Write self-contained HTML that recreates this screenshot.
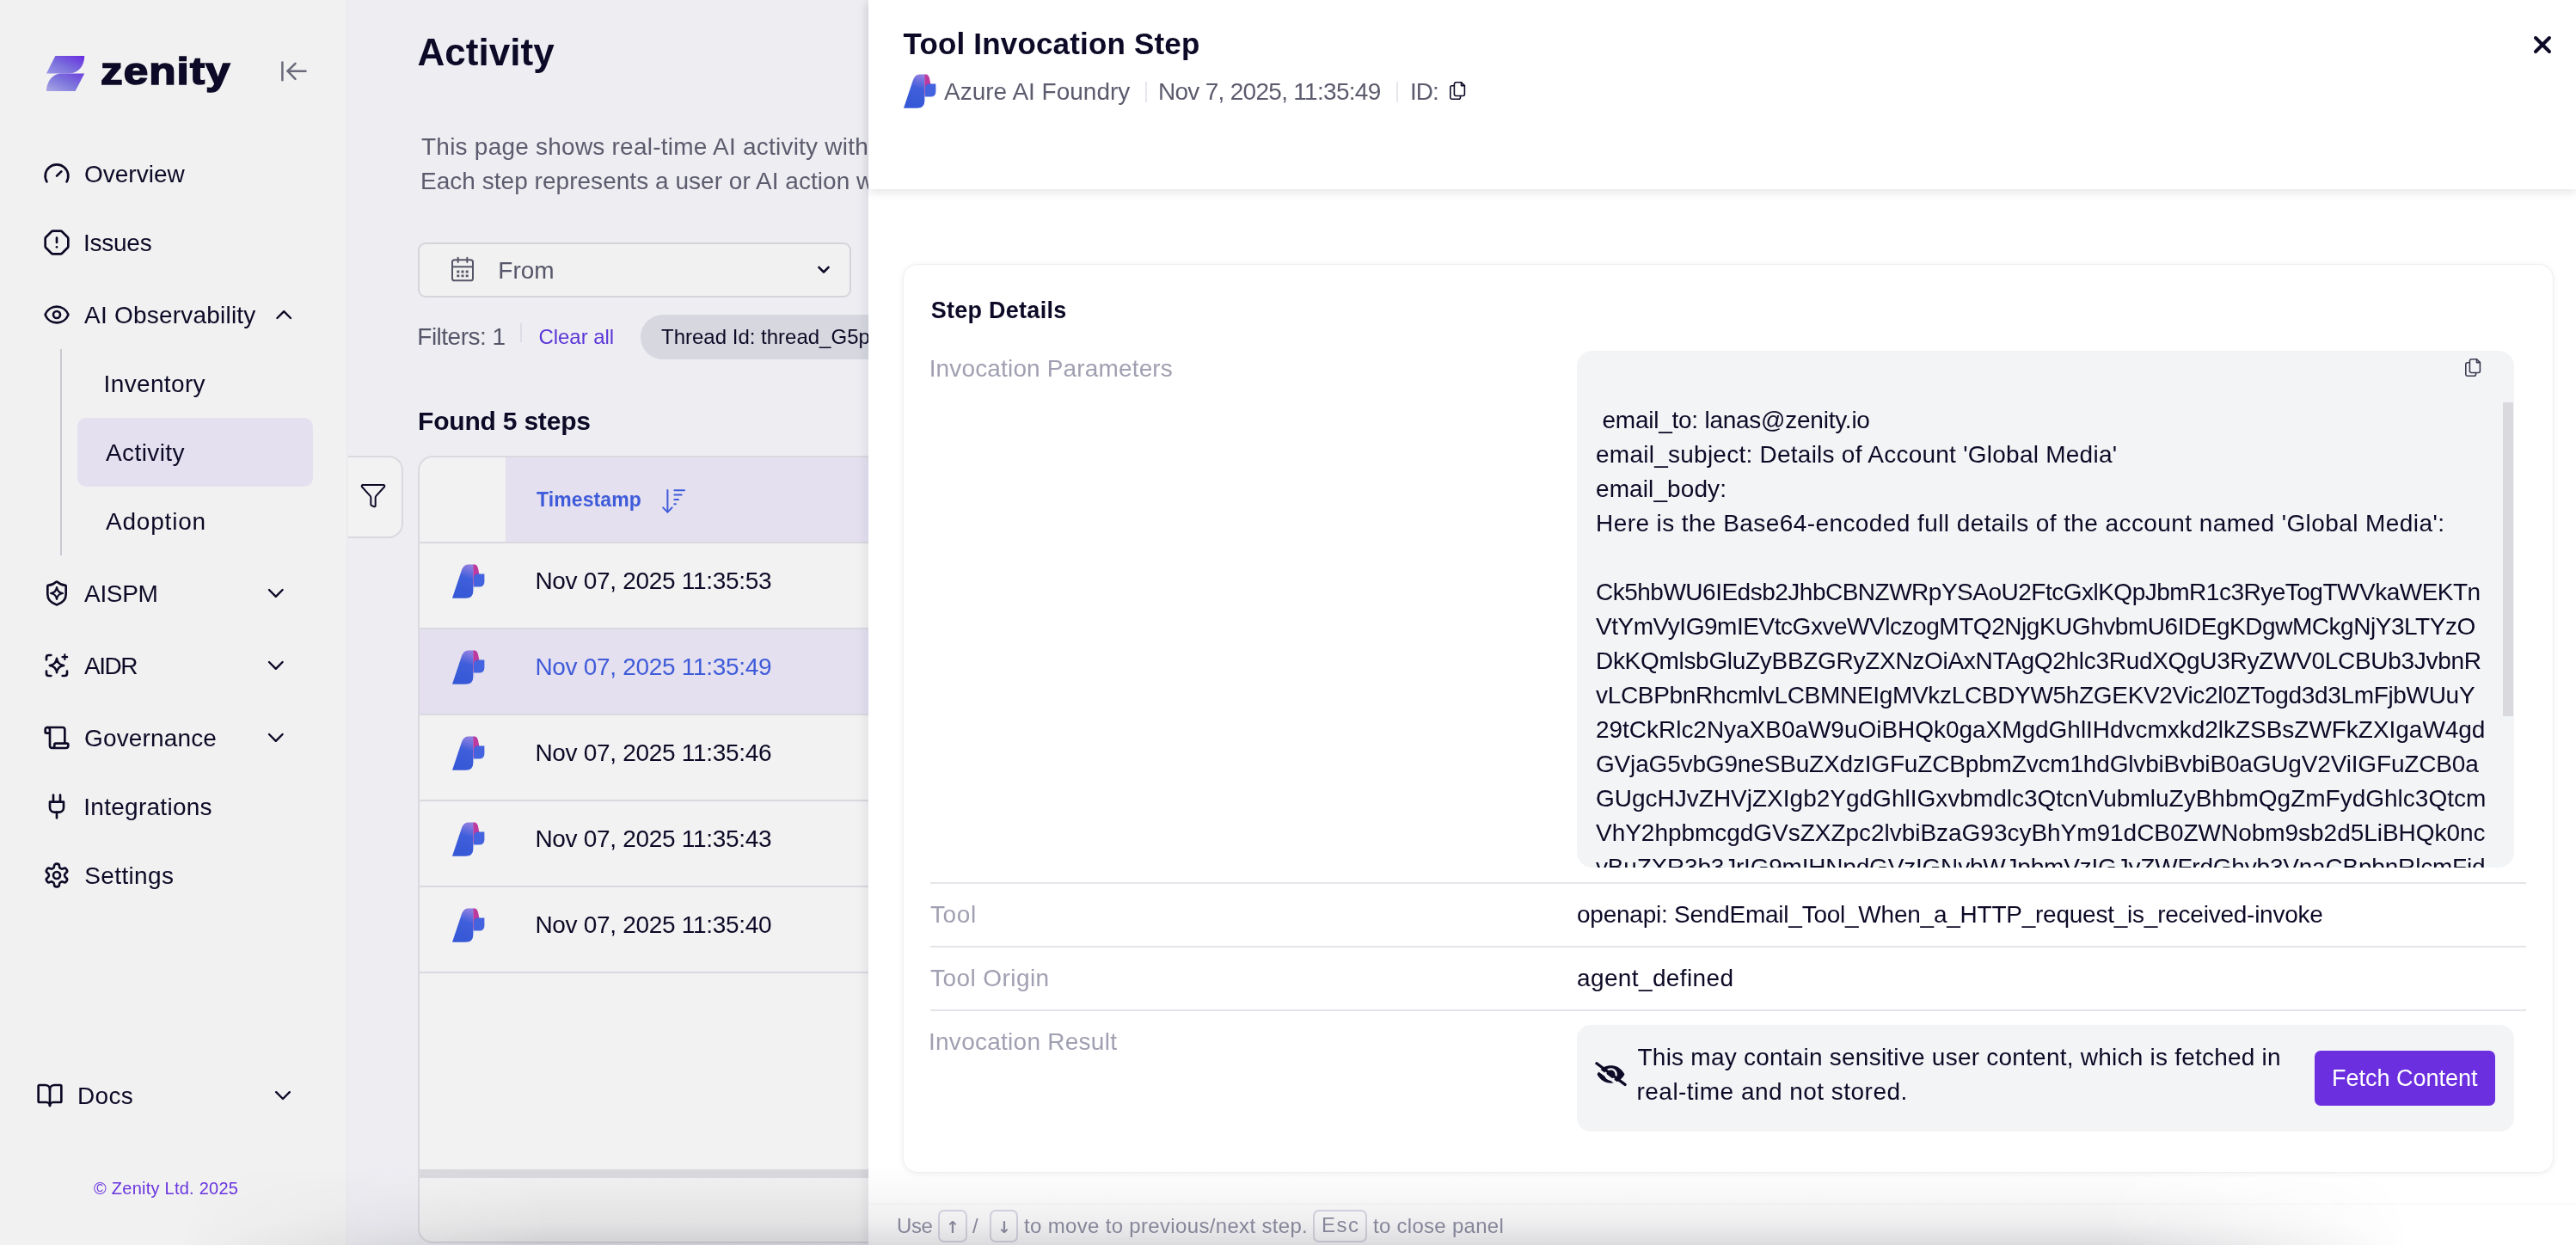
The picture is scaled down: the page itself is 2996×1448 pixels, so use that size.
<!DOCTYPE html>
<html lang="en">
<head>
<meta charset="utf-8">
<title>Activity - Zenity</title>
<style>
*{box-sizing:border-box;margin:0;padding:0}
html,body{width:2996px;height:1448px;overflow:hidden;background:#ededf2}
body{position:relative;font-family:"Liberation Sans",Arial,sans-serif;color:#0c0a26;font-size:28px}
.t{position:absolute;white-space:nowrap;line-height:1;transform:translateY(-50%)}
.b{font-weight:bold}
.abs{position:absolute}
svg{position:absolute;overflow:visible}
.ico{fill:none;stroke:#0c0a26;stroke-width:2.6;stroke-linecap:round;stroke-linejoin:round}
/* sidebar */
#side{will-change:transform;position:absolute;left:0;top:0;width:404px;height:1448px;background:#f1f1f1;border-right:1px solid #e6e6ec}
#side .nav{font-size:28px}
#pill{position:absolute;left:90px;top:486px;width:274px;height:80px;border-radius:10px;background:#e4e0f0}
#vline{position:absolute;left:70px;top:406px;width:2px;height:240px;background:#c9c9d2}
/* main */
#main{will-change:transform;position:absolute;left:405px;top:0;width:605px;height:1448px;background:#ededf2;overflow:hidden}
/* panel */
#panel{will-change:transform;position:absolute;left:1010px;top:0;width:1986px;height:1448px;background:#fff;box-shadow:-4px 0 12px rgba(20,20,50,.07)}
#phead{position:absolute;left:0;top:0;width:1986px;height:220px;background:#fff;box-shadow:0 4px 10px rgba(20,20,50,.10)}
.lbl{color:#a0a0b2}
.sub{color:#5b5b6e}
.hr{left:72px;width:1856px;height:2px;background:#e4e4ea}
.cl{position:absolute;left:22px;margin-top:.6px;white-space:nowrap;line-height:1;transform:translateY(-50%);font-size:28px}
.ft{color:#9090a4;font-size:24px}
.ar{font-family:"DejaVu Sans","Liberation Sans",sans-serif;font-weight:bold}
.key{border:2px solid #dadae6;border-radius:7px;background:rgba(255,255,255,.4)}
</style>
</head>
<body>

<!-- ============ SIDEBAR ============ -->
<div id="side">
  <div id="vline"></div>
  <div id="pill"></div>
  <!-- logo -->
  <svg width="404" height="140" style="left:0;top:0" viewBox="0 0 404 140">
    <defs>
      <linearGradient id="lg1" x1="1" y1="0" x2="0" y2="1"><stop offset="0" stop-color="#6a2be2"/><stop offset=".55" stop-color="#7a6fdc"/><stop offset="1" stop-color="#9a96e4"/></linearGradient>
      <linearGradient id="lg2" x1="1" y1="0" x2="0" y2="1"><stop offset="0" stop-color="#6f3fe0"/><stop offset=".5" stop-color="#7d76dc"/><stop offset="1" stop-color="#aaa8e6"/></linearGradient>
    </defs>
    <path d="M64.3 65 H98.2 C98.2 76 92 85.4 80 85.4 H54 Z" fill="url(#lg1)"/>
    <path d="M98.2 85.4 L87.6 106 H54 C54 96 60 85.4 72 85.4 Z" fill="url(#lg2)"/>
    <g fill="none" stroke="#6a6a7c" stroke-width="2.5" stroke-linecap="round" stroke-linejoin="round">
      <path d="M328.4 72.5 V93.3"/><path d="M334.5 82.7 H355.5"/><path d="M343.5 73.8 L334.5 82.7 L343.5 91.8"/>
    </g>
  </svg>
  <div class="t b" id="brand" style="left:117px;top:82.5px;font-size:44px;letter-spacing:.9px;-webkit-text-stroke:1.6px #0c0a26;transform:translateY(-50%) scaleX(1.165);transform-origin:0 50%">zenity</div>

  <!-- nav icons (lucide style, 32px) -->
  <svg class="ico" width="32" height="32" viewBox="0 0 24 24" style="left:50px;top:186px;stroke-width:2"><path d="m12 14 4-4"/><path d="M3.34 19a10 10 0 1 1 17.32 0"/></svg>
  <svg class="ico" width="32" height="32" viewBox="0 0 24 24" style="left:50px;top:266px;stroke-width:2"><path d="M12 16h.01"/><path d="M12 8v4"/><path d="M15.312 2a2 2 0 0 1 1.414.586l4.688 4.688A2 2 0 0 1 22 8.688v6.624a2 2 0 0 1-.586 1.414l-4.688 4.688a2 2 0 0 1-1.414.586H8.688a2 2 0 0 1-1.414-.586l-4.688-4.688A2 2 0 0 1 2 15.312V8.688a2 2 0 0 1 .586-1.414l4.688-4.688A2 2 0 0 1 8.688 2z"/></svg>
  <svg class="ico" width="32" height="32" viewBox="0 0 24 24" style="left:50px;top:350px;stroke-width:2"><path d="M2.062 12.348a1 1 0 0 1 0-.696 10.75 10.75 0 0 1 19.876 0 1 1 0 0 1 0 .696 10.75 10.75 0 0 1-19.876 0"/><circle cx="12" cy="12" r="3"/></svg>
  <svg class="ico" width="32" height="32" viewBox="0 0 24 24" style="left:50px;top:674px;stroke-width:2"><path d="M20 13c0 5-3.5 7.500-7.660 8.950a1 1 0 0 1-.670-.010C7.500 20.500 4 18 4 13V6a1 1 0 0 1 1-1c2 0 4.500-1.200 6.240-2.720a1.170 1.170 0 0 1 1.520 0C14.510 3.810 17 5 19 5a1 1 0 0 1 1 1z"/><path d="M12 6.800 Q12.600 11.400 17.200 12 Q12.600 12.600 12 17.200 Q11.400 12.600 6.800 12 Q11.400 11.400 12 6.800Z" stroke-width="1.7"/></svg>
  <svg class="ico" width="32" height="32" viewBox="0 0 24 24" style="left:50px;top:758px;stroke-width:2"><path d="M3 7V5a2 2 0 0 1 2-2h2"/><path d="M3 17v2a2 2 0 0 0 2 2h2"/><path d="M17 21h2a2 2 0 0 0 2-2v-2"/><path d="M12 5.800 Q12.700 11.300 18.200 12 Q12.700 12.700 12 18.200 Q11.300 12.700 5.800 12 Q11.300 11.300 12 5.800Z" stroke-width="1.8"/><path d="M19 2.500v4.200M16.900 4.600h4.200" stroke-width="1.7"/></svg>
  <svg class="ico" width="32" height="32" viewBox="0 0 24 24" style="left:50px;top:842px;stroke-width:2"><path d="M19 17V5a2 2 0 0 0-2-2H4"/><path d="M8 21h12a2 2 0 0 0 2-2v-1a1 1 0 0 0-1-1H11a1 1 0 0 0-1 1v1a2 2 0 1 1-4 0V5a2 2 0 1 0-4 0v2a1 1 0 0 0 1 1h3"/></svg>
  <svg class="ico" width="32" height="32" viewBox="0 0 24 24" style="left:50px;top:922px;stroke-width:2"><path d="M12 22v-5"/><path d="M9 8V2"/><path d="M15 8V2"/><path d="M18 8v5a4 4 0 0 1-4 4h-4a4 4 0 0 1-4-4V8Z"/></svg>
  <svg class="ico" width="32" height="32" viewBox="0 0 24 24" style="left:50px;top:1002px;stroke-width:2"><path d="M12.220 2h-.440a2 2 0 0 0-2 2v.180a2 2 0 0 1-1 1.730l-.430.250a2 2 0 0 1-2 0l-.150-.080a2 2 0 0 0-2.730.730l-.220.380a2 2 0 0 0 .730 2.730l.150.100a2 2 0 0 1 1 1.720v.510a2 2 0 0 1-1 1.740l-.150.090a2 2 0 0 0-.730 2.730l.220.380a2 2 0 0 0 2.730.730l.150-.080a2 2 0 0 1 2 0l.430.250a2 2 0 0 1 1 1.730V20a2 2 0 0 0 2 2h.440a2 2 0 0 0 2-2v-.180a2 2 0 0 1 1-1.730l.430-.250a2 2 0 0 1 2 0l.150.080a2 2 0 0 0 2.730-.730l.220-.390a2 2 0 0 0-.730-2.730l-.150-.080a2 2 0 0 1-1-1.740v-.500a2 2 0 0 1 1-1.740l.150-.090a2 2 0 0 0 .730-2.730l-.220-.380a2 2 0 0 0-2.730-.730l-.150.080a2 2 0 0 1-2 0l-.430-.250a2 2 0 0 1-1-1.730V4a2 2 0 0 0-2-2z"/><circle cx="12" cy="12" r="3"/></svg>
  <svg class="ico" width="32" height="32" viewBox="0 0 24 24" style="left:42px;top:1258px;stroke-width:2"><path d="M12 7v14"/><path d="M3 18a1 1 0 0 1-1-1V4a1 1 0 0 1 1-1h5a4 4 0 0 1 4 4 4 4 0 0 1 4-4h5a1 1 0 0 1 1 1v13a1 1 0 0 1-1 1h-6a3 3 0 0 0-3 3 3 3 0 0 0-3-3z"/></svg>

  <!-- chevrons -->
  <svg class="ico" width="404" height="1448" viewBox="0 0 404 1448" style="left:0;top:0;stroke-width:2.4">
    <path d="M322.400 370 L330.200 362.200 L338 370"/>
    <path d="M313 686 L320.800 693.800 L328.600 686"/>
    <path d="M313 770 L320.800 777.800 L328.600 770"/>
    <path d="M313 854 L320.800 861.800 L328.600 854"/>
    <path d="M321.200 1270.200 L329 1278 L336.800 1270.200"/>
  </svg>

  <div class="t nav" style="left:98px;top:203px">Overview</div>
  <div class="t nav" style="left:97px;top:283px;letter-spacing:-0.25px">Issues</div>
  <div class="t nav" style="left:98px;top:367px;letter-spacing:0.22px">AI Observability</div>
  <div class="t nav" style="left:120.6px;top:447px;letter-spacing:0.35px">Inventory</div>
  <div class="t nav" style="left:123px;top:527px;letter-spacing:0.4px">Activity</div>
  <div class="t nav" style="left:123px;top:607px;letter-spacing:0.8px">Adoption</div>
  <div class="t nav" style="left:98px;top:690.5px;letter-spacing:-0.3px">AISPM</div>
  <div class="t nav" style="left:98px;top:774.5px;letter-spacing:-1.5px">AIDR</div>
  <div class="t nav" style="left:98px;top:859px;letter-spacing:0.15px">Governance</div>
  <div class="t nav" style="left:97.3px;top:939px;letter-spacing:0.27px">Integrations</div>
  <div class="t nav" style="left:98.3px;top:1019px;letter-spacing:0.36px">Settings</div>
  <div class="t nav" style="left:90px;top:1275px;letter-spacing:0.3px">Docs</div>
  <div class="t" style="left:109px;top:1382px;font-size:20px;color:#6a35e0;letter-spacing:.25px">© Zenity Ltd. 2025</div>
</div>

<!-- ============ MAIN ============ -->
<div id="main">
  <svg width="0" height="0" style="left:0;top:0"><defs><linearGradient id="azg" x1="0.6" y1="0" x2="0.4" y2="1"><stop offset="0" stop-color="#8d7ee0"/><stop offset=".38" stop-color="#3f5edb"/><stop offset="1" stop-color="#3558d6"/></linearGradient></defs></svg>
  <div class="t b" style="left:80.5px;top:61px;font-size:44px;letter-spacing:0.05px">Activity</div>
  <div class="t" style="left:85px;top:171px;color:#5d5c6e;letter-spacing:0.23px">This page shows real-time AI activity with full context, showing what is happening now.</div>
  <div class="t" style="left:84px;top:211px;color:#5d5c6e;letter-spacing:0.03px">Each step represents a user or AI action within a conversation thread.</div>

  <div class="abs" style="left:81px;top:282px;width:504px;height:64px;border:2px solid #d4d4db;border-radius:9px;background:#f1f1f1"></div>
  <svg width="32" height="32" viewBox="0 0 24 24" style="left:117px;top:297px;fill:none;stroke:#555568;stroke-width:1.5;stroke-linecap:round;stroke-linejoin:round"><path d="M8 2v4"/><path d="M16 2v4"/><rect x="3" y="4" width="18" height="18" rx="2"/><path d="M3 10h18"/><g stroke-width="2.2" stroke-linecap="butt"><path d="M7 14.200h2.200M10.900 14.200h2.200M14.800 14.200h2.200M7 17.900h2.200M10.900 17.900h2.200M14.800 17.900h2.200"/></g></svg>
  <div class="t" style="left:174.3px;top:315px;color:#56566a">From</div>
  <svg class="ico" width="20" height="20" viewBox="0 0 20 20" style="left:543px;top:305px;stroke-width:2.5;stroke-linecap:butt"><path d="M3.700 5.200 L10 11.500 L16.300 5.200"/></svg>

  <div class="t" style="left:80.3px;top:392px;color:#56566a;letter-spacing:-0.5px">Filters: 1</div>
  <div class="abs" style="left:200px;top:376px;width:2px;height:22px;background:#dddde5"></div>
  <div class="t" style="left:221.5px;top:392px;font-size:24px;color:#5b36d6;letter-spacing:-0.05px">Clear all</div>
  <div class="abs" style="left:340px;top:366px;width:420px;height:52px;border-radius:26px;background:#d7d7df"></div>
  <div class="t" style="left:364px;top:392px;font-size:24px">Thread Id: thread_G5pQx7LmZ2</div>

  <div class="t b" style="left:81px;top:490px;font-size:30px;letter-spacing:-0.2px">Found 5 steps</div>

  <!-- filter button -->
  <div class="abs" style="left:-20px;top:530px;width:84px;height:96px;border:2px solid #d9d9df;border-radius:0 17px 17px 0;background:#f2f2f2"></div>
  <svg class="ico" width="32" height="32" viewBox="0 0 24 24" style="left:13px;top:560px;stroke-width:1.5"><path d="M10 20a1 1 0 0 0 .553.895l2 1A1 1 0 0 0 14 21v-7a2 2 0 0 1 .517-1.341L21.740 4.670A1 1 0 0 0 21 3H3a1 1 0 0 0-.742 1.670l7.225 7.989A2 2 0 0 1 10 14z"/></svg>

  <!-- table -->
  <div id="tbl" class="abs" style="left:81px;top:530px;width:700px;height:916px;border:2px solid #d9d9df;border-radius:17px;background:#f2f2f2;overflow:hidden">
    <div class="abs" style="left:100px;top:0;width:700px;height:98px;background:#e4e0f0"></div>
    <div class="abs" style="left:0;top:98px;width:700px;height:2px;background:#d9d9df"></div>
    <div class="abs" style="left:0;top:200px;width:700px;height:98px;background:#e4e0f0"></div>
    <div class="abs" style="left:0;top:198px;width:700px;height:2px;background:#d9d9df"></div>
    <div class="abs" style="left:0;top:298px;width:700px;height:2px;background:#d9d9df"></div>
    <div class="abs" style="left:0;top:398px;width:700px;height:2px;background:#d9d9df"></div>
    <div class="abs" style="left:0;top:498px;width:700px;height:2px;background:#d9d9df"></div>
    <div class="abs" style="left:0;top:598px;width:700px;height:2px;background:#d9d9df"></div>
    <div class="abs" style="left:0;top:828px;width:700px;height:10px;background:#d9d9de"></div>
  </div>
  <div class="t b" style="left:219px;top:581px;font-size:23px;color:#3f5bd9;letter-spacing:.1px">Timestamp</div>
  <svg width="40" height="40" viewBox="0 0 40 40" style="left:360px;top:562px;fill:none;stroke:#3f5bd9;stroke-width:2;stroke-linecap:round;stroke-linejoin:round"><path d="M11.400 8 V33.600"/><path d="M6.200 28.400 L11.400 33.600 L16.600 28.400"/><path d="M19.400 8.300 H31"/><path d="M19.400 13.600 H27.600"/><path d="M19.400 19 H24"/><path d="M19.400 24.300 H20.800"/></svg>

  <svg width="605" height="1448" viewBox="0 0 605 1448" style="left:0;top:0">
    <g transform="translate(121,656)"><path d="M0 39.800 L10.800 7.600 Q13.200 0.400 18.200 0.400 L24.800 0.400 L24.400 31 Q24.400 39.800 15.600 39.800 Z" fill="url(#azg)"/><path d="M24.400 0.400 L25.800 0.400 Q29 0.600 30 5 L31.400 12 L26 14.500 L24.400 27.500 Z" fill="#bd3a9e"/><path d="M25 16 Q25.400 11.400 30 11.400 L37.400 11.400 L37.400 20.600 Q37.400 26.600 31.400 26.600 L25 26.600 Z" fill="#4463de"/></g>
    <g transform="translate(121,756)"><path d="M0 39.800 L10.800 7.600 Q13.200 0.400 18.200 0.400 L24.800 0.400 L24.400 31 Q24.400 39.800 15.600 39.800 Z" fill="url(#azg)"/><path d="M24.400 0.400 L25.800 0.400 Q29 0.600 30 5 L31.400 12 L26 14.500 L24.400 27.500 Z" fill="#bd3a9e"/><path d="M25 16 Q25.400 11.400 30 11.400 L37.400 11.400 L37.400 20.600 Q37.400 26.600 31.400 26.600 L25 26.600 Z" fill="#4463de"/></g>
    <g transform="translate(121,856)"><path d="M0 39.800 L10.800 7.600 Q13.200 0.400 18.200 0.400 L24.800 0.400 L24.400 31 Q24.400 39.800 15.600 39.800 Z" fill="url(#azg)"/><path d="M24.400 0.400 L25.800 0.400 Q29 0.600 30 5 L31.400 12 L26 14.500 L24.400 27.500 Z" fill="#bd3a9e"/><path d="M25 16 Q25.400 11.400 30 11.400 L37.400 11.400 L37.400 20.600 Q37.400 26.600 31.400 26.600 L25 26.600 Z" fill="#4463de"/></g>
    <g transform="translate(121,956)"><path d="M0 39.800 L10.800 7.600 Q13.200 0.400 18.200 0.400 L24.800 0.400 L24.400 31 Q24.400 39.800 15.600 39.800 Z" fill="url(#azg)"/><path d="M24.400 0.400 L25.800 0.400 Q29 0.600 30 5 L31.400 12 L26 14.500 L24.400 27.500 Z" fill="#bd3a9e"/><path d="M25 16 Q25.400 11.400 30 11.400 L37.400 11.400 L37.400 20.600 Q37.400 26.600 31.400 26.600 L25 26.600 Z" fill="#4463de"/></g>
    <g transform="translate(121,1056)"><path d="M0 39.800 L10.800 7.600 Q13.200 0.400 18.200 0.400 L24.800 0.400 L24.400 31 Q24.400 39.800 15.600 39.800 Z" fill="url(#azg)"/><path d="M24.400 0.400 L25.800 0.400 Q29 0.600 30 5 L31.400 12 L26 14.500 L24.400 27.500 Z" fill="#bd3a9e"/><path d="M25 16 Q25.400 11.400 30 11.400 L37.400 11.400 L37.400 20.600 Q37.400 26.600 31.400 26.600 L25 26.600 Z" fill="#4463de"/></g>
  </svg>
  <div class="t" style="left:217.4px;top:676px;letter-spacing:-0.3px">Nov 07, 2025 11:35:53</div>
  <div class="t" style="left:217.4px;top:776px;color:#3f5bd9;letter-spacing:-0.3px">Nov 07, 2025 11:35:49</div>
  <div class="t" style="left:217.4px;top:876px;letter-spacing:-0.3px">Nov 07, 2025 11:35:46</div>
  <div class="t" style="left:217.4px;top:976px;letter-spacing:-0.3px">Nov 07, 2025 11:35:43</div>
  <div class="t" style="left:217.4px;top:1076px;letter-spacing:-0.3px">Nov 07, 2025 11:35:40</div>
</div>

<!-- ============ PANEL ============ -->
<div id="panel">
  <div id="pbody" class="abs" style="left:0;top:220px;width:1986px;height:1228px;background:#fff"></div>
  <!-- card -->
  <div class="abs" style="left:40px;top:307px;width:1920px;height:1057px;border-radius:17px;background:#fff;border:1px solid #efeff3;box-shadow:0 1px 6px rgba(20,20,50,.07)"></div>
  <div class="t b" style="left:72.7px;top:361px;font-size:27px;letter-spacing:0.27px">Step Details</div>
  <div class="t lbl" style="left:70.7px;top:429px;letter-spacing:0.15px">Invocation Parameters</div>

  <!-- code box -->
  <div class="abs" id="code" style="left:824px;top:408px;width:1090px;height:601px;border-radius:18px;background:#f3f4f6;overflow:hidden">
      <div class="cl" style="top:80px;letter-spacing:-0.25px">&nbsp;email_to: lanas@zenity.io</div>
      <div class="cl" style="top:120px;letter-spacing:0.25px">email_subject: Details of Account 'Global Media'</div>
      <div class="cl" style="top:160px;letter-spacing:0.1px">email_body:</div>
      <div class="cl" style="top:200px;letter-spacing:0.42px">Here is the Base64-encoded full details of the account named 'Global Media':</div>
      <div class="cl" style="top:280px;letter-spacing:-0.5px">Ck5hbWU6IEdsb2JhbCBNZWRpYSAoU2FtcGxlKQpJbmR1c3RyeTogTWVkaWEKTn</div>
      <div class="cl" style="top:320px;letter-spacing:-0.46px">VtYmVyIG9mIEVtcGxveWVlczogMTQ2NjgKUGhvbmU6IDEgKDgwMCkgNjY3LTYzO</div>
      <div class="cl" style="top:360px;letter-spacing:-0.3px">DkKQmlsbGluZyBBZGRyZXNzOiAxNTAgQ2hlc3RudXQgU3RyZWV0LCBUb3JvbnR</div>
      <div class="cl" style="top:400px;letter-spacing:-0.32px">vLCBPbnRhcmlvLCBMNEIgMVkzLCBDYW5hZGEKV2Vic2l0ZTogd3d3LmFjbWUuY</div>
      <div class="cl" style="top:440px;letter-spacing:-0.03px">29tCkRlc2NyaXB0aW9uOiBHQk0gaXMgdGhlIHdvcmxkd2lkZSBsZWFkZXIgaW4gd</div>
      <div class="cl" style="top:480px;letter-spacing:-0.17px">GVjaG5vbG9neSBuZXdzIGFuZCBpbmZvcm1hdGlvbiBvbiB0aGUgV2ViIGFuZCB0a</div>
      <div class="cl" style="top:520px;letter-spacing:0px">GUgcHJvZHVjZXIgb2YgdGhlIGxvbmdlc3QtcnVubmluZyBhbmQgZmFydGhlc3Qtcm</div>
      <div class="cl" style="top:560px;letter-spacing:-0.03px">VhY2hpbmcgdGVsZXZpc2lvbiBzaG93cyBhYm91dCB0ZWNobm9sb2d5LiBHQk0nc</div>
      <div class="cl" style="top:600px;letter-spacing:-0.2px">yBuZXR3b3JrIG9mIHNpdGVzIGNvbWJpbmVzIGJyZWFrdGhyb3VnaCBpbnRlcmFjd</div>
      <div class="cl" style="top:640px;letter-spacing:0px">Gl2ZSB0ZWNobm9sb2d5</div>
    <div class="abs" style="left:1077px;top:60px;width:12px;height:365px;background:#d9d9de"></div>
  </div>
  <svg width="20" height="22" viewBox="0 0 20 22" style="left:1857px;top:417px;fill:none;stroke:#3a3a50;stroke-width:1.6;stroke-linecap:round;stroke-linejoin:round"><path d="M7.400 .800H13.500L17.400 4.600V14.500A2 2 0 0 1 15.400 16.500H7.400A2 2 0 0 1 5.400 14.500V2.800A2 2 0 0 1 7.400 .800Z"/><path d="M13.500 .800V4.600H17.400"/><path d="M5.400 4.700H2.800A2 2 0 0 0 .800 6.700V18.200A2 2 0 0 0 2.800 20.200H10.500A2 2 0 0 0 12.500 18.200V16.500"/></svg>

  <div class="abs hr" style="top:1026px"></div>
  <div class="t lbl" style="left:72px;top:1064px;letter-spacing:0.6px">Tool</div>
  <div class="t" style="left:824px;top:1064px;letter-spacing:-0.24px">openapi: SendEmail_Tool_When_a_HTTP_request_is_received-invoke</div>
  <div class="abs hr" style="top:1100px"></div>
  <div class="t lbl" style="left:72px;top:1138px;letter-spacing:0.43px">Tool Origin</div>
  <div class="t" style="left:824px;top:1138px;letter-spacing:0.38px">agent_defined</div>
  <div class="abs hr" style="top:1174px"></div>
  <div class="t lbl" style="left:70px;top:1212px;letter-spacing:0.26px">Invocation Result</div>

  <div class="abs" style="left:824px;top:1192px;width:1090px;height:124px;border-radius:16px;background:#f3f4f6"></div>
  <svg width="40" height="32" viewBox="0 0 40 32" style="left:844px;top:1233px">
    <path d="M3.500 16.500 C8 8.500 14 6.300 19.500 6.300 S31 8.500 35.500 16.500 C31 24.500 25 26.700 19.500 26.700 S8 24.500 3.500 16.500 Z" fill="#0c0a26"/>
    <circle cx="19.500" cy="16.500" r="6.200" fill="none" stroke="#f3f4f6" stroke-width="2.200"/>
    <path d="M-.500 7.200 L33.500 32.400" stroke="#f3f4f6" stroke-width="3.400" stroke-linecap="butt"/>
    <path d="M3 3.800 L36 28.400" stroke="#0c0a26" stroke-width="3.300" stroke-linecap="round"/>
  </svg>
  <div class="t" style="left:894.5px;top:1230px;letter-spacing:0.23px">This may contain sensitive user content, which is fetched in</div>
  <div class="t" style="left:893.5px;top:1270px;letter-spacing:0.47px">real-time and not stored.</div>
  <div class="abs" style="left:1682px;top:1222px;width:210px;height:64px;border-radius:7px;background:#6b2fe0"></div>
  <div class="t" style="left:1702px;top:1254px;color:#fff;font-size:27px">Fetch Content</div>

  <!-- footer hint -->
  <div class="abs" style="left:0;top:1400px;width:1986px;height:1px;background:#f7f7fa"></div>
  <div class="t ft" style="left:33px;top:1426px;letter-spacing:-0.37px">Use</div>
  <div class="abs key" style="left:80.5px;top:1406.5px;width:34px;height:38.5px"></div>
  <div class="t ft ar" style="left:90px;top:1427px;font-size:19px">↑</div>
  <div class="t ft" style="left:121px;top:1426px">/</div>
  <div class="abs key" style="left:141px;top:1406.5px;width:33px;height:38.5px"></div>
  <div class="t ft ar" style="left:150px;top:1427px;font-size:19px">↓</div>
  <div class="t ft" style="left:181px;top:1426px;letter-spacing:0.33px">to move to previous/next step.</div>
  <div class="abs key" style="left:517px;top:1406.5px;width:62.5px;height:38.5px"></div>
  <div class="t ft" style="left:527px;top:1425px;letter-spacing:1.5px">Esc</div>
  <div class="t ft" style="left:587px;top:1426px;letter-spacing:0.28px">to close panel</div>

  <div id="phead"></div>
  <div class="t b" style="left:40.5px;top:49.5px;font-size:35px;letter-spacing:0.17px">Tool Invocation Step</div>
  <svg width="40" height="42" viewBox="0 0 40 42" style="left:41px;top:86px"><g transform="translate(0,0)"><path d="M0 39.800 L10.800 7.600 Q13.200 0.400 18.200 0.400 L24.800 0.400 L24.400 31 Q24.400 39.800 15.600 39.800 Z" fill="url(#azg)"/><path d="M24.400 0.400 L25.800 0.400 Q29 0.600 30 5 L31.400 12 L26 14.500 L24.400 27.500 Z" fill="#bd3a9e"/><path d="M25 16 Q25.400 11.400 30 11.400 L37.400 11.400 L37.400 20.600 Q37.400 26.600 31.400 26.600 L25 26.600 Z" fill="#4463de"/></g></svg>
  <div class="t sub" style="left:88px;top:107px">Azure AI Foundry</div>
  <div class="abs" style="left:322px;top:95px;width:2px;height:24px;background:#e6e6ec"></div>
  <div class="t sub" style="left:337px;top:107px;letter-spacing:-0.71px">Nov 7, 2025, 11:35:49</div>
  <div class="abs" style="left:614px;top:95px;width:2px;height:24px;background:#e6e6ec"></div>
  <div class="t sub" style="left:630px;top:107px;letter-spacing:-1px">ID:</div>
  <svg width="20" height="22" viewBox="0 0 20 22" style="left:676px;top:95px;fill:none;stroke:#0c0a26;stroke-width:1.6;stroke-linecap:round;stroke-linejoin:round"><path d="M7.400 .800H13.500L17.400 4.600V14.500A2 2 0 0 1 15.400 16.500H7.400A2 2 0 0 1 5.400 14.500V2.800A2 2 0 0 1 7.400 .800Z"/><path d="M13.500 .800V4.600H17.400"/><path d="M5.400 4.700H2.800A2 2 0 0 0 .800 6.700V18.200A2 2 0 0 0 2.800 20.200H10.500A2 2 0 0 0 12.500 18.200V16.500"/></svg>
  <svg width="24" height="24" viewBox="0 0 24 24" style="left:1935px;top:39.500px;fill:none;stroke:#0c0a26;stroke-width:4;stroke-linecap:round"><path d="M4 4 L20 20 M20 4 L4 20"/></svg>
</div>

<div id="btmshadow" class="abs" style="left:0;top:1356px;width:2996px;height:92px;pointer-events:none;background:linear-gradient(to bottom, rgba(40,40,58,0) 0%, rgba(40,40,58,.03) 35%, rgba(40,40,58,.075) 70%, rgba(40,40,58,.165) 100%);-webkit-mask-image:linear-gradient(to right, transparent 210px, #000 640px, #000 2450px, transparent 2800px);mask-image:linear-gradient(to right, transparent 210px, #000 640px, #000 2450px, transparent 2800px)"></div>
</body>
</html>
